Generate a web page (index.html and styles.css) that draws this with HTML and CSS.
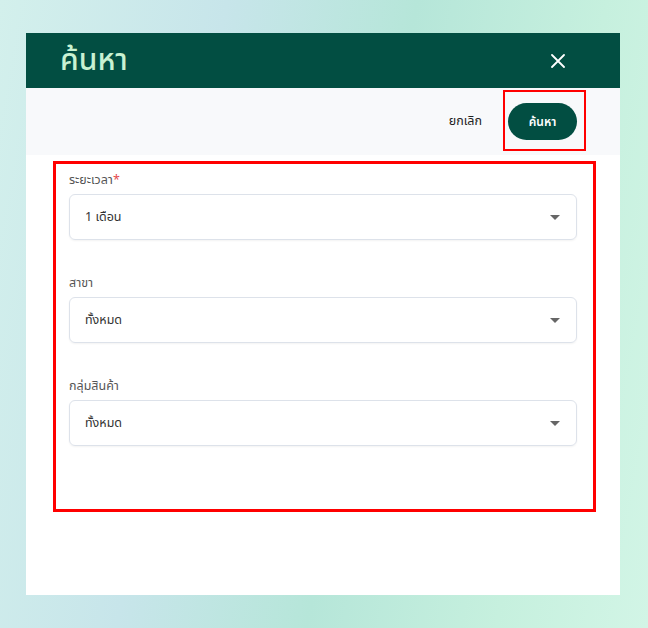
FILE: index.html
```html
<!DOCTYPE html>
<html>
<head>
    <title>ค้นหา</title>
    <link rel="stylesheet" href="styles.css">
</head>
<body>
    <div class="dialog">
        <div class="dialog-header">
            <h1 class="dialog-title">ค้นหา</h1>
            <button class="close-btn" type="button" aria-label="ปิด">
                <svg width="14" height="14" viewBox="0 0 14 14">
                    <path d="M1 1L13 13M13 1L1 13" stroke="#fff" stroke-width="1.8" stroke-linecap="round"/>
                </svg>
            </button>
        </div>

        <div class="dialog-actions">
            <button class="cancel-btn" type="button">ยกเลิก</button>
            <div class="highlight-btn">
                <button class="search-btn" type="button">ค้นหา</button>
            </div>
        </div>

        <form class="dialog-form">
            <div class="field">
                <label class="field-label">ระยะเวลา<span class="required">*</span></label>
                <div class="select">
                    <span>1 เดือน</span>
                    <span class="caret"></span>
                </div>
            </div>

            <div class="field">
                <label class="field-label">สาขา</label>
                <div class="select">
                    <span>ทั้งหมด</span>
                    <span class="caret"></span>
                </div>
            </div>

            <div class="field">
                <label class="field-label">กลุ่มสินค้า</label>
                <div class="select">
                    <span>ทั้งหมด</span>
                    <span class="caret"></span>
                </div>
            </div>

            <div class="highlight-form"></div>
        </form>
    </div>
</body>
</html>
```

FILE: styles.css
```css
html, body {
    height: 100%;
}

body {
    font-family: "Noto Sans", "Noto Sans Thai", "DejaVu Sans", sans-serif;
    margin: 0;
    padding: 33px 0 0 26px;
    box-sizing: border-box;
    background: linear-gradient(100deg, #d3f0ec 0%, #c7e5ea 30%, #b6e6d9 55%, #c6f0de 80%, #d2f5e6 100%);
}

.dialog {
    width: 594px;
    height: 562px;
    background-color: #fff;
    display: flex;
    flex-direction: column;
}

.dialog-header {
    height: 55px;
    background-color: #024e42;
    display: flex;
    align-items: center;
    justify-content: space-between;
    padding: 0 55px 0 34px;
}

.dialog-title {
    margin: 0;
    font-size: 30px;
    font-weight: 500;
    color: #c8f2d2;
}

.close-btn {
    background: none;
    border: none;
    padding: 0;
    width: 14px;
    height: 14px;
    display: flex;
    cursor: pointer;
}

.dialog-actions {
    height: 67px;
    background-color: #f8f9fb;
    display: flex;
    align-items: center;
    justify-content: flex-end;
    padding-right: 43px;
    gap: 26px;
}

.cancel-btn {
    background: none;
    border: none;
    padding: 0;
    font-family: inherit;
    font-size: 12.5px;
    color: #222;
    cursor: pointer;
}

.highlight-btn {
    position: relative;
}

.highlight-btn::after {
    content: "";
    position: absolute;
    left: -5px;
    top: -13px;
    right: -9px;
    bottom: -11px;
    border: 2px solid #f00;
}

.search-btn {
    width: 69px;
    height: 37px;
    border: none;
    border-radius: 19px;
    background-color: #024e42;
    color: #fff;
    font-family: inherit;
    font-size: 12px;
    font-weight: 600;
    cursor: pointer;
    display: block;
}

.dialog-form {
    position: relative;
    padding: 17px 43px 0 43px;
    display: flex;
    flex-direction: column;
    gap: 35px;
}

.field {
    display: flex;
    flex-direction: column;
    gap: 6px;
}

.field-label {
    font-size: 12.5px;
    line-height: 16px;
    color: #555;
}

.required {
    color: #e5484d;
}

.select {
    height: 46px;
    box-sizing: border-box;
    border: 1px solid #dde2ea;
    border-radius: 6px;
    box-shadow: 0 1px 2px rgba(0, 0, 0, 0.05);
    display: flex;
    align-items: center;
    justify-content: space-between;
    padding: 0 16px 0 15px;
    font-size: 12.5px;
    color: #333;
}

.caret {
    width: 0;
    height: 0;
    border-left: 5px solid transparent;
    border-right: 5px solid transparent;
    border-top: 5px solid #666;
}

.highlight-form {
    position: absolute;
    left: 27px;
    top: 6px;
    width: 543px;
    height: 351px;
    box-sizing: border-box;
    border: 3px solid #f00;
    pointer-events: none;
}
```
